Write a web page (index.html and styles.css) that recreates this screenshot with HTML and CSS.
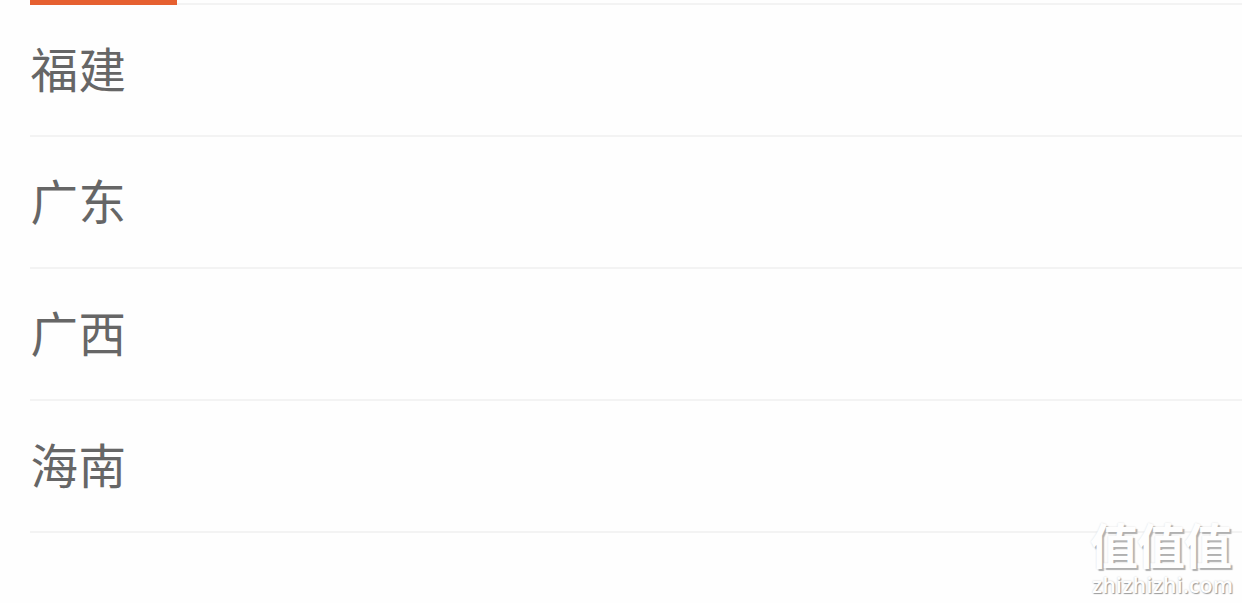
FILE: index.html
```html
<!DOCTYPE html>
<html lang="zh-CN">
<head>
    <meta charset="UTF-8">
    <meta name="viewport" content="width=device-width, initial-scale=1.0">
    <title>选择地区</title>
    <link rel="stylesheet" href="styles.css">
</head>
<body>

<div class="container">
    <div class="tabs">
        <div class="tab-active"></div>
    </div>
    <ul class="region-list">
        <li>福建</li>
        <li>广东</li>
        <li>广西</li>
        <li>海南</li>
    </ul>
</div>

<div class="watermark">
    <div class="watermark-name">值值值</div>
    <div class="watermark-site">zhizhizhi.com</div>
</div>

</body>
</html>
```

FILE: styles.css
```css
body {
    font-family: "Noto Sans CJK SC", sans-serif;
    background-color: #fefefe;
    color: #666;
    margin: 0;
    height: 603px;
    position: relative;
    overflow: hidden;
}
.container {
    padding-left: 30px;
}
.tabs {
    height: 5px;
    box-sizing: border-box;
    border-bottom: 2px solid #f3f3f3;
}
.tab-active {
    width: 147px;
    height: 5px;
    background-color: #e66030;
}
.region-list {
    list-style: none;
    margin: 0;
    padding: 0;
}
.region-list li {
    box-sizing: border-box;
    height: 132px;
    line-height: 126px;
    font-size: 47.5px;
    letter-spacing: 0.5px;
    text-indent: 0.5px;
    border-bottom: 2px solid #f3f3f3;
}
/* site mark in the bottom right corner */
.watermark {
    position: absolute;
    left: 1090px;
    top: 519px;
    width: 152px;
    color: #fff;
    white-space: nowrap;
    opacity: 0.99;
}
.watermark-name {
    height: 54px;
    line-height: 48px;
    font-size: 48px;
    font-weight: bold;
    letter-spacing: -1px;
    text-shadow: 2px 2px 1px #b0b0b0, 0 0 2px #ddd;
}
.watermark-site {
    height: 24px;
    line-height: 24px;
    padding-left: 2px;
    font-family: "Open Sans", sans-serif;
    font-size: 21px;
    font-weight: 600;
    letter-spacing: 0.35px;
    text-shadow: 1px 1px 1px #999, 0 0 2px #ccc;
}
```
